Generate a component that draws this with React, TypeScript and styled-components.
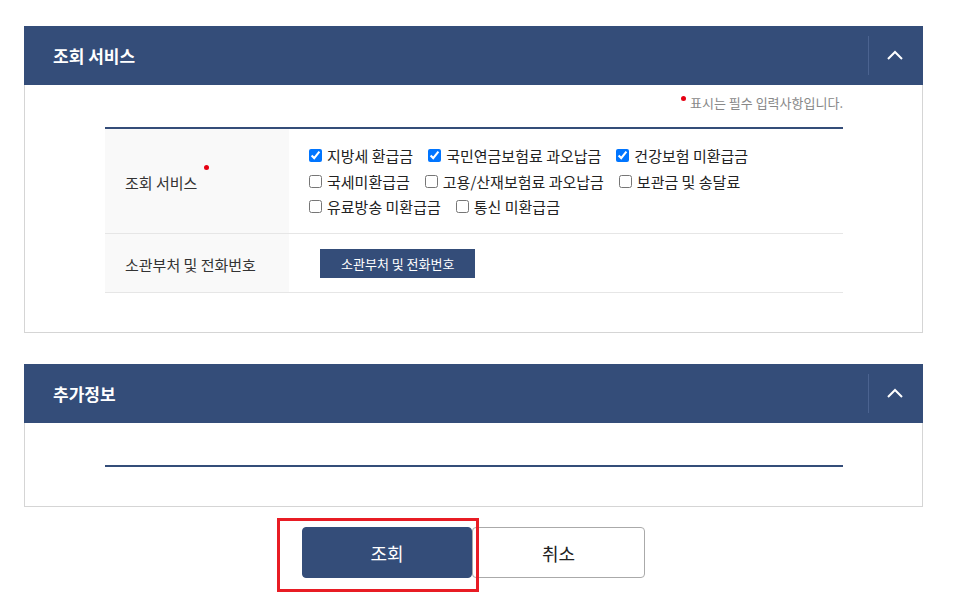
import React from 'react'
import styled, { createGlobalStyle } from 'styled-components'

const GlobalStyle = createGlobalStyle`
  *, *::before, *::after {
    box-sizing: border-box;
  }
  html, body {
    margin: 0;
    padding: 0;
    background: #fff;
  }
  body {
    font-family: 'Noto Sans CJK KR', 'Noto Sans', sans-serif;
    color: #222;
  }
`

const NAVY = '#344d79'

const Page = styled.div`
  width: 923px;
  padding: 26px 0 30px 24px;
  display: flex;
  flex-flow: column nowrap;
`

const Panel = styled.section<{ $gap?: number }>`
  display: flex;
  flex-flow: column nowrap;
  margin-bottom: ${(p) => p.$gap ?? 0}px;
`

const PanelHeader = styled.header`
  height: 59px;
  background: ${NAVY};
  display: flex;
  align-items: center;
  justify-content: space-between;
`

const PanelTitle = styled.h2`
  margin: 0 0 0 29px;
  font-size: 17px;
  font-weight: 700;
  color: #fff;
`

const ToggleButton = styled.button`
  width: 55px;
  height: 39px;
  border: 0;
  border-left: 1px solid #4b6390;
  background: transparent;
  display: flex;
  align-items: center;
  justify-content: center;
  padding: 0 2px 2px 0;
  cursor: pointer;
`

const PanelBody = styled.div`
  border: 1px solid #d5d5d5;
  border-top: 0;
  padding: 0 79px 39px 80px;
`

const Notice = styled.p`
  margin: 0;
  height: 42px;
  padding-top: 9px;
  text-align: right;
  font-size: 13px;
  line-height: 18px;
  color: #888;
`

const Dot = styled.span`
  display: inline-block;
  width: 5px;
  height: 5px;
  border-radius: 50%;
  background: #e60012;
  vertical-align: top;
`

const NoticeDot = styled(Dot)`
  margin: 2px 4px 0 0;
`

const LabelDot = styled(Dot)`
  margin: 0 0 30px 7px;
`

const Table = styled.div`
  border-top: 2px solid ${NAVY};
  display: grid;
  grid-template-columns: 184px minmax(0, 1fr);
`

const LabelCell = styled.div<{ $height: number }>`
  height: ${(p) => p.$height}px;
  background: #f9f9f9;
  border-bottom: 1px solid #e6e6e6;
  display: flex;
  align-items: center;
  padding: 3px 0 0 20px;
  font-size: 15px;
  color: #333;
`

const ValueCell = styled.div<{ $height: number }>`
  height: ${(p) => p.$height}px;
  border-bottom: 1px solid #e6e6e6;
  display: flex;
  align-items: center;
  padding-left: 20px;
`

const CheckGroup = styled.div`
  display: flex;
  flex-flow: row wrap;
  width: 530px;
  row-gap: 0.5px;
`

const CheckItem = styled.label`
  display: inline-flex;
  align-items: center;
  height: 25px;
  margin-right: 15px;
  font-size: 15px;
  color: #222;
  white-space: nowrap;
  cursor: pointer;

  input {
    width: 13px;
    height: 13px;
    margin: 0 5px 0 0;
  }
`

const SmallButton = styled.button`
  margin-left: 11px;
  height: 29px;
  padding: 0 21px;
  border: 0;
  background: ${NAVY};
  color: #fff;
  font-family: inherit;
  font-size: 13px;
  cursor: pointer;
`

const Actions = styled.div`
  display: flex;
  justify-content: center;
  padding-top: 20px;
`

const Highlight = styled.div`
  position: relative;
  display: flex;
`

const HighlightBox = styled.span`
  position: absolute;
  left: -25px;
  top: -9px;
  right: -7px;
  bottom: -14px;
  border: 3px solid #e81c24;
  pointer-events: none;
`

const ActionButton = styled.button<{ $primary?: boolean }>`
  width: ${(p) => (p.$primary ? 170 : 173)}px;
  height: 51px;
  border-radius: 4px;
  border: 1px solid ${(p) => (p.$primary ? NAVY : '#aaa')};
  background: ${(p) => (p.$primary ? NAVY : '#fff')};
  color: ${(p) => (p.$primary ? '#fff' : '#222')};
  font-family: inherit;
  font-size: 18px;
  cursor: pointer;
`

const Chevron = () => (
  <svg width="16" height="10" viewBox="0 0 16 10" fill="none">
    <polyline points="1,9 8,2 15,9" stroke="#fff" strokeWidth="2" />
  </svg>
)

const services = [
  { label: '지방세 환급금', checked: true },
  { label: '국민연금보험료 과오납금', checked: true },
  { label: '건강보험 미환급금', checked: true },
  { label: '국세미환급금', checked: false },
  { label: '고용/산재보험료 과오납금', checked: false },
  { label: '보관금 및 송달료', checked: false },
  { label: '유료방송 미환급금', checked: false },
  { label: '통신 미환급금', checked: false },
]

const App: React.FC = () => (
  <>
    <GlobalStyle />
    <Page>
      <Panel $gap={31}>
        <PanelHeader>
          <PanelTitle>조회 서비스</PanelTitle>
          <ToggleButton aria-label="접기">
            <Chevron />
          </ToggleButton>
        </PanelHeader>
        <PanelBody>
          <Notice>
            <NoticeDot />
            표시는 필수 입력사항입니다.
          </Notice>
          <Table>
            <LabelCell $height={105}>
              조회 서비스
              <LabelDot />
            </LabelCell>
            <ValueCell $height={105}>
              <CheckGroup>
                {services.map((s) => (
                  <CheckItem key={s.label}>
                    <input type="checkbox" defaultChecked={s.checked} />
                    {s.label}
                  </CheckItem>
                ))}
              </CheckGroup>
            </ValueCell>
            <LabelCell $height={59}>소관부처 및 전화번호</LabelCell>
            <ValueCell $height={59}>
              <SmallButton>소관부처 및 전화번호</SmallButton>
            </ValueCell>
          </Table>
        </PanelBody>
      </Panel>

      <Panel>
        <PanelHeader>
          <PanelTitle>추가정보</PanelTitle>
          <ToggleButton aria-label="접기">
            <Chevron />
          </ToggleButton>
        </PanelHeader>
        <PanelBody>
          <Notice />
          <Table />
        </PanelBody>
      </Panel>

      <Actions>
        <Highlight>
          <ActionButton $primary>조회</ActionButton>
          <HighlightBox />
        </Highlight>
        <ActionButton>취소</ActionButton>
      </Actions>
    </Page>
  </>
)

export default App
